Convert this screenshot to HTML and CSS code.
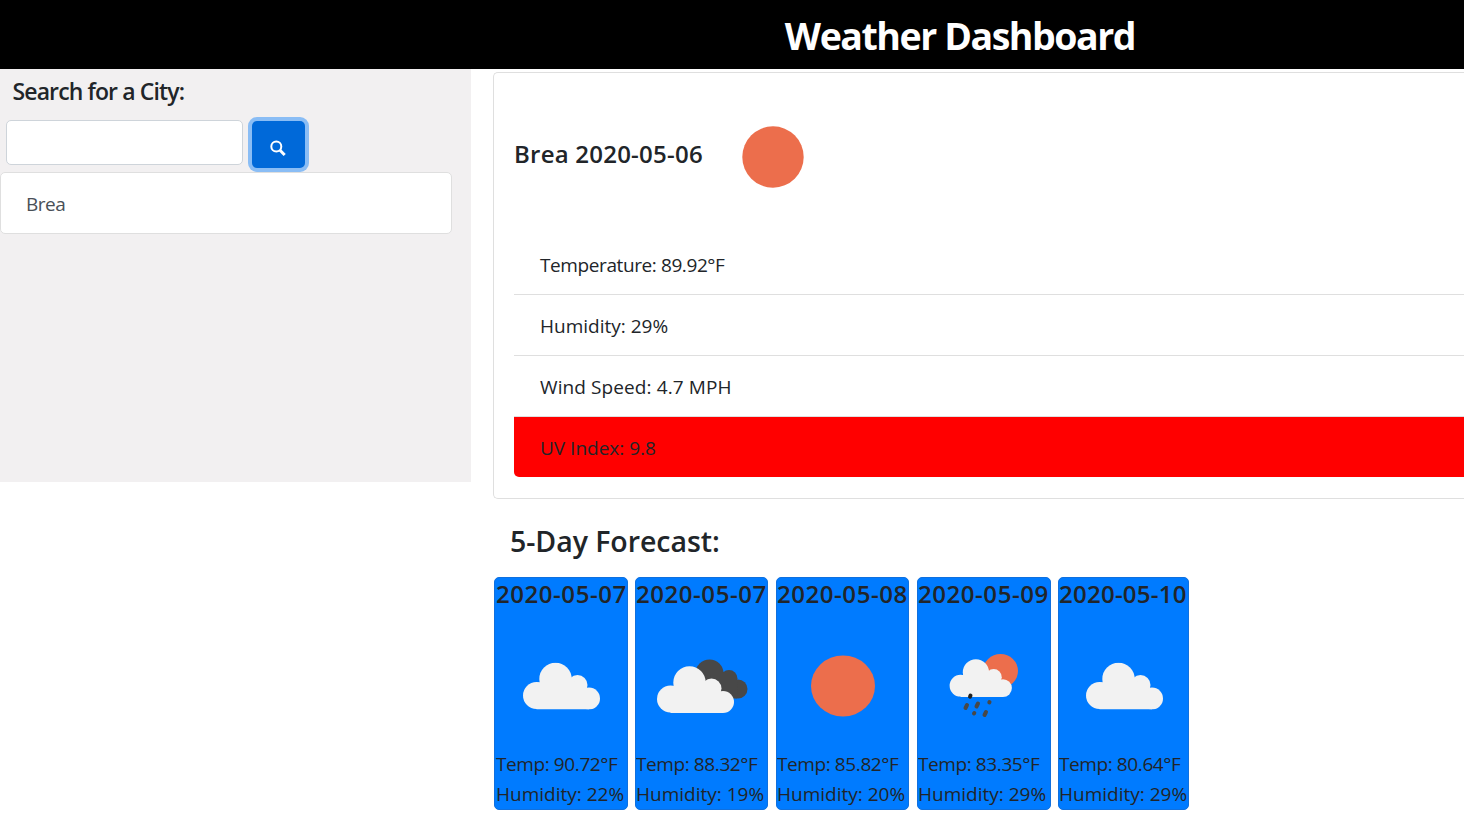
FILE: index.html
```html
<!DOCTYPE html>
<html lang="en">
<head>
<meta charset="utf-8">
<title>Weather Dashboard</title>
<link rel="stylesheet" href="styles.css">
</head>
<body>
<svg class="defs" width="0" height="0" aria-hidden="true">
  <symbol id="cloud" viewBox="0 0 77 47">
    <circle cx="13.500" cy="33" r="13.500"/><circle cx="32.500" cy="16.500" r="16.200"/><circle cx="54.500" cy="22.500" r="10"/><circle cx="66" cy="36" r="11"/><path d="M13.500 46.500V20H33L48 15L55 24L66 27V47H13.500Z"/>
  </symbol>
</svg>
<div class="page">
  <header class="topbar"><h1 class="title">Weather Dashboard</h1></header>
  <div class="columns">
    <aside class="sidebar">
      <h2 class="search-title">Search for a City:</h2>
      <form class="search-row">
        <input class="search-input" type="text" aria-label="City">
        <button class="search-button" type="button" aria-label="Search">
          <svg width="16" height="17" viewBox="0 0 16 17"><circle cx="6.3" cy="6.5" r="5" fill="none" stroke="#fff" stroke-width="2"/><path d="M10 10.3L14.7 15" stroke="#fff" stroke-width="3"/></svg>
        </button>
      </form>
      <ul class="history"><li>Brea</li></ul>
    </aside>
    <main class="main">
      <section class="current">
        <div class="current-head">
          <h2 class="current-title">Brea 2020-05-06</h2>
          <svg class="current-icon" width="62" height="62" viewBox="0 0 62 62"><circle cx="31" cy="31" r="30.7" fill="#ec6e4c"/></svg>
        </div>
        <ul class="details">
          <li class="temperature">Temperature: 89.92°F</li>
          <li>Humidity: 29%</li>
          <li class="wind">Wind Speed: 4.7 MPH</li>
          <li class="uv">UV Index: 9.8</li>
        </ul>
      </section>
      <h2 class="forecast-title">5-Day Forecast:</h2>
      <div class="forecast">
        <article class="day wide">
          <h3>2020-05-07</h3>
          <svg class="icon" width="130" height="119" viewBox="0 0 130 119"><use href="#cloud" x="27" y="35.500" width="77" height="47" fill="#f2f2f2"/></svg>
          <p>Temp: 90.72°F</p><p class="hum">Humidity: 22%</p>
        </article>
        <article class="day">
          <h3>2020-05-07</h3>
          <svg class="icon" width="130" height="119" viewBox="0 0 130 119"><g fill="#484848"><circle cx="73.500" cy="46.500" r="14"/><circle cx="93" cy="51.500" r="8.500"/><circle cx="102" cy="62" r="9.500"/><path d="M73 45L93 45L102 54L101 71.500H80Z"/></g><use href="#cloud" x="20.500" y="39" width="78" height="47" fill="#f2f2f2"/></svg>
          <p>Temp: 88.32°F</p><p class="hum">Humidity: 19%</p>
        </article>
        <article class="day">
          <h3>2020-05-08</h3>
          <svg class="icon" width="130" height="119" viewBox="0 0 130 119"><ellipse cx="66" cy="59" rx="32" ry="30.500" fill="#ec6e4c"/></svg>
          <p>Temp: 85.82°F</p><p class="hum">Humidity: 20%</p>
        </article>
        <article class="day wide rain">
          <h3>2020-05-09</h3>
          <svg class="icon" width="130" height="119" viewBox="0 0 130 119"><ellipse cx="82.500" cy="44" rx="17.500" ry="17" fill="#ec6e4c"/><use href="#cloud" x="31" y="32" width="63.500" height="38" fill="#f2f2f2"/><g stroke="#484848" stroke-width="4" stroke-linecap="round"><path d="M52.500 68.500L52 69.700" stroke="#222"/><path d="M49 78L47.500 81M60 76.500L58.500 79.500M71.500 75L71.300 75.500M56.300 86L56 86.500M68 85L66.500 88"/></g></svg>
          <p>Temp: 83.35°F</p><p class="hum">Humidity: 29%</p>
        </article>
        <article class="day last">
          <h3>2020-05-10</h3>
          <svg class="icon" width="127" height="119" viewBox="0 0 127 119"><use href="#cloud" x="27" y="35.500" width="77" height="47" fill="#f2f2f2"/></svg>
          <p>Temp: 80.64°F</p><p class="hum">Humidity: 29%</p>
        </article>
      </div>
    </main>
  </div>
</div>
</body>
</html>
```
FILE: styles.css
```css
* { box-sizing: border-box; }
body { margin: 0; background: #fff; color: #212529; font: 400 19px/30px "Open Sans", "Noto Sans", sans-serif; }
h1, h2, h3, p, ul { margin: 0; padding: 0; white-space: nowrap; }
ul { list-style: none; }
.defs { display: block; height: 0; }
.page { height: 831px; overflow: hidden; }
.topbar { height: 69px; background: #000; color: #fff; text-align: center; padding: 6px 0 0 456px; }
.title { font-size: 37.5px; line-height: 60px; font-weight: 700; letter-spacing: -1.45px; }
.columns { display: flex; align-items: flex-start; gap: 22px; }
.sidebar { width: 471px; height: 413px; background: #f2f0f1; }
.search-title { padding: 7px 0 0 12.5px; font-size: 23px; line-height: 30px; font-weight: 600; letter-spacing: -0.88px; }
.search-row { display: flex; align-items: flex-start; gap: 9px; padding: 14px 0 0 6px; }
.search-input { width: 237px; height: 45px; border: 1px solid #ced4da; border-radius: 5px; background: #fff; }
.search-button { display: flex; align-items: center; justify-content: center; width: 53px; height: 47px; margin-top: 1px; padding: 7px 1px 0 0; border: 0; border-radius: 5px; background: #0069d9; box-shadow: 0 0 0 4px #8abdf5; }
.history { position: relative; width: 452px; height: 62px; margin-top: 4px; padding: 16px 25px; border: 1px solid #dfdfdf; border-radius: 5px; background: #fff; color: #495057; letter-spacing: -0.5px; }
.main { flex: 1; padding-top: 3px; }
.current { height: 427px; border: 1px solid #dfdfdf; border-right: 0; border-radius: 5px 0 0 5px; padding: 53px 0 20px 20px; }
.current-head { display: flex; align-items: flex-start; height: 108px; }
.current-title { width: 228px; font-size: 24px; line-height: 56px; font-weight: 600; letter-spacing: 0.23px; }
.details li { height: 61px; padding: 16px 26px; border-bottom: 1px solid #dfdfdf; letter-spacing: 0; }
.details .temperature { letter-spacing: -0.4px; }
.details .wind { letter-spacing: 0.1px; }
.details .uv { height: 60px; border: 0; border-radius: 0 0 0 5px; background: #f00; }
.forecast-title { padding: 22px 0 0 17px; font-size: 28.5px; line-height: 40px; font-weight: 600; letter-spacing: -0.05px; }
.forecast { display: grid; grid-template-columns: repeat(5, 134px); column-gap: 7px; padding: 16px 0 0 1px; }
.day { width: 133px; height: 233px; padding: 1px 0 0; overflow: hidden; border: 1px solid #1070de; border-radius: 5px; background: #007bff; color: #212529; }
.wide { width: 134px; padding-left: 1px; }
.rain { padding-left: 0; }
.last { width: 131px; }
.day h3 { font-size: 24px; line-height: 30px; font-weight: 600; letter-spacing: 0.55px; }
.last h3 { letter-spacing: 0.25px; }
.icon { display: block; margin: 18px 0 3px; }
.day p { line-height: 30px; letter-spacing: -0.4px; }
.day .hum { letter-spacing: 0; }
```
